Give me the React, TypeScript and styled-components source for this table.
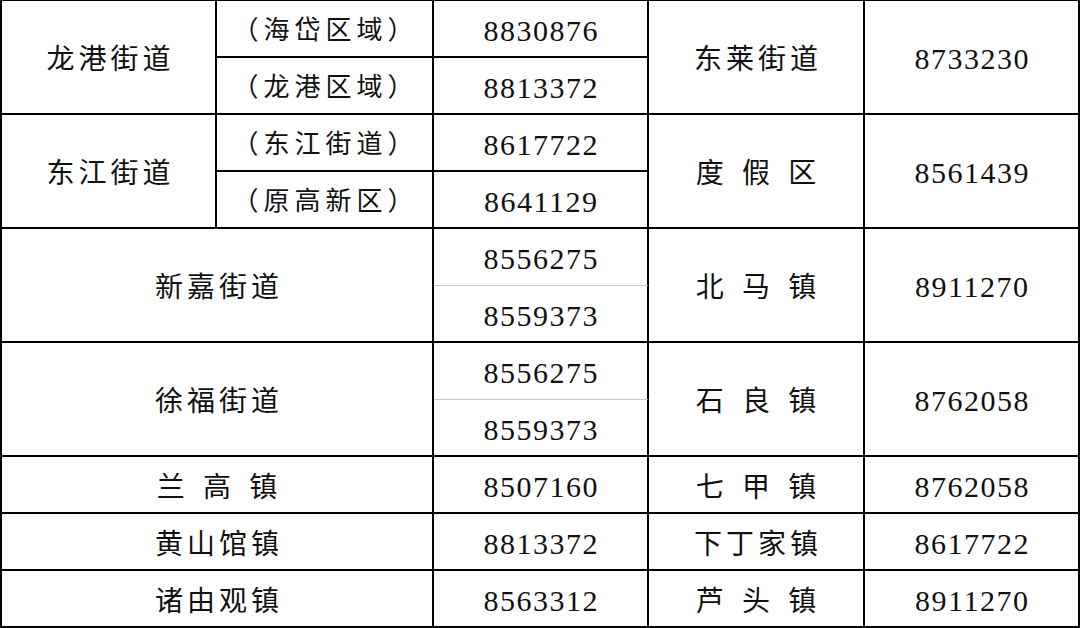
import React from 'react';
import styled, { createGlobalStyle, css } from 'styled-components';

const GlobalStyle = createGlobalStyle`
  html, body {
    margin: 0;
    padding: 0;
    background: #fff;
  }
`;

type Kind = 'name' | 'sub' | 'num';

type CellData = {
  text: string;
  row: number;
  col: number;
  rowSpan?: number;
  colSpan?: number;
  kind: Kind;
  soft?: boolean;
};

const cells: CellData[] = [
  { text: '龙港街道', row: 1, col: 1, rowSpan: 2, kind: 'name' },
  { text: '（海岱区域）', row: 1, col: 2, kind: 'sub' },
  { text: '8830876', row: 1, col: 3, kind: 'num' },
  { text: '东莱街道', row: 1, col: 4, rowSpan: 2, kind: 'name' },
  { text: '8733230', row: 1, col: 5, rowSpan: 2, kind: 'num' },
  { text: '（龙港区域）', row: 2, col: 2, kind: 'sub' },
  { text: '8813372', row: 2, col: 3, kind: 'num' },

  { text: '东江街道', row: 3, col: 1, rowSpan: 2, kind: 'name' },
  { text: '（东江街道）', row: 3, col: 2, kind: 'sub' },
  { text: '8617722', row: 3, col: 3, kind: 'num' },
  { text: '度 假 区', row: 3, col: 4, rowSpan: 2, kind: 'name' },
  { text: '8561439', row: 3, col: 5, rowSpan: 2, kind: 'num' },
  { text: '（原高新区）', row: 4, col: 2, kind: 'sub' },
  { text: '8641129', row: 4, col: 3, kind: 'num' },

  { text: '新嘉街道', row: 5, col: 1, rowSpan: 2, colSpan: 2, kind: 'name' },
  { text: '8556275', row: 5, col: 3, kind: 'num', soft: true },
  { text: '北 马 镇', row: 5, col: 4, rowSpan: 2, kind: 'name' },
  { text: '8911270', row: 5, col: 5, rowSpan: 2, kind: 'num' },
  { text: '8559373', row: 6, col: 3, kind: 'num' },

  { text: '徐福街道', row: 7, col: 1, rowSpan: 2, colSpan: 2, kind: 'name' },
  { text: '8556275', row: 7, col: 3, kind: 'num', soft: true },
  { text: '石 良 镇', row: 7, col: 4, rowSpan: 2, kind: 'name' },
  { text: '8762058', row: 7, col: 5, rowSpan: 2, kind: 'num' },
  { text: '8559373', row: 8, col: 3, kind: 'num' },

  { text: '兰 高 镇', row: 9, col: 1, colSpan: 2, kind: 'name' },
  { text: '8507160', row: 9, col: 3, kind: 'num' },
  { text: '七 甲 镇', row: 9, col: 4, kind: 'name' },
  { text: '8762058', row: 9, col: 5, kind: 'num' },

  { text: '黄山馆镇', row: 10, col: 1, colSpan: 2, kind: 'name' },
  { text: '8813372', row: 10, col: 3, kind: 'num' },
  { text: '下丁家镇', row: 10, col: 4, kind: 'name' },
  { text: '8617722', row: 10, col: 5, kind: 'num' },

  { text: '诸由观镇', row: 11, col: 1, colSpan: 2, kind: 'name' },
  { text: '8563312', row: 11, col: 3, kind: 'num' },
  { text: '芦 头 镇', row: 11, col: 4, kind: 'name' },
  { text: '8911270', row: 11, col: 5, kind: 'num' },
];

const Sheet = styled.div`
  width: 1080px;
  height: 628px;
  box-sizing: border-box;
  display: grid;
  grid-template-columns: 215px 217px 215px 216px 215px;
  grid-template-rows: repeat(11, 57px);
  border-top: 1px solid #000;
  border-left: 2px solid #000;
  background: #fff;
`;

const kindStyles = {
  name: css`
    font-family: 'Noto Sans CJK SC', 'Noto Sans', sans-serif;
    font-size: 28px;
    letter-spacing: 4px;
    word-spacing: 4px;
    padding-left: 4px;
  `,
  sub: css`
    font-family: 'Noto Sans CJK SC', 'Noto Sans', sans-serif;
    font-size: 26px;
    letter-spacing: 5px;
    padding-left: 2px;
    padding-bottom: 2px;
  `,
  num: css`
    font-family: 'Liberation Serif', 'Times New Roman', serif;
    font-size: 30px;
    letter-spacing: 1.5px;
    padding-left: 1.5px;
    padding-top: 4px;
  `,
};

const Cell = styled.div<{
  $row: number;
  $col: number;
  $rowSpan: number;
  $colSpan: number;
  $kind: Kind;
  $soft: boolean;
}>`
  grid-row: ${p => p.$row} / span ${p => p.$rowSpan};
  grid-column: ${p => p.$col} / span ${p => p.$colSpan};
  box-sizing: border-box;
  display: flex;
  align-items: center;
  justify-content: center;
  color: #111;
  white-space: pre;
  border-right: 2px solid #000;
  border-bottom: ${p => (p.$soft ? '1px solid #c9c9c9' : '2px solid #000')};
  ${p => kindStyles[p.$kind]}
`;

export default function App() {
  return (
    <>
      <GlobalStyle />
      <Sheet>
        {cells.map((c, i) => (
          <Cell
            key={i}
            $row={c.row}
            $col={c.col}
            $rowSpan={c.rowSpan ?? 1}
            $colSpan={c.colSpan ?? 1}
            $kind={c.kind}
            $soft={!!c.soft}
          >
            {c.text}
          </Cell>
        ))}
      </Sheet>
    </>
  );
}
